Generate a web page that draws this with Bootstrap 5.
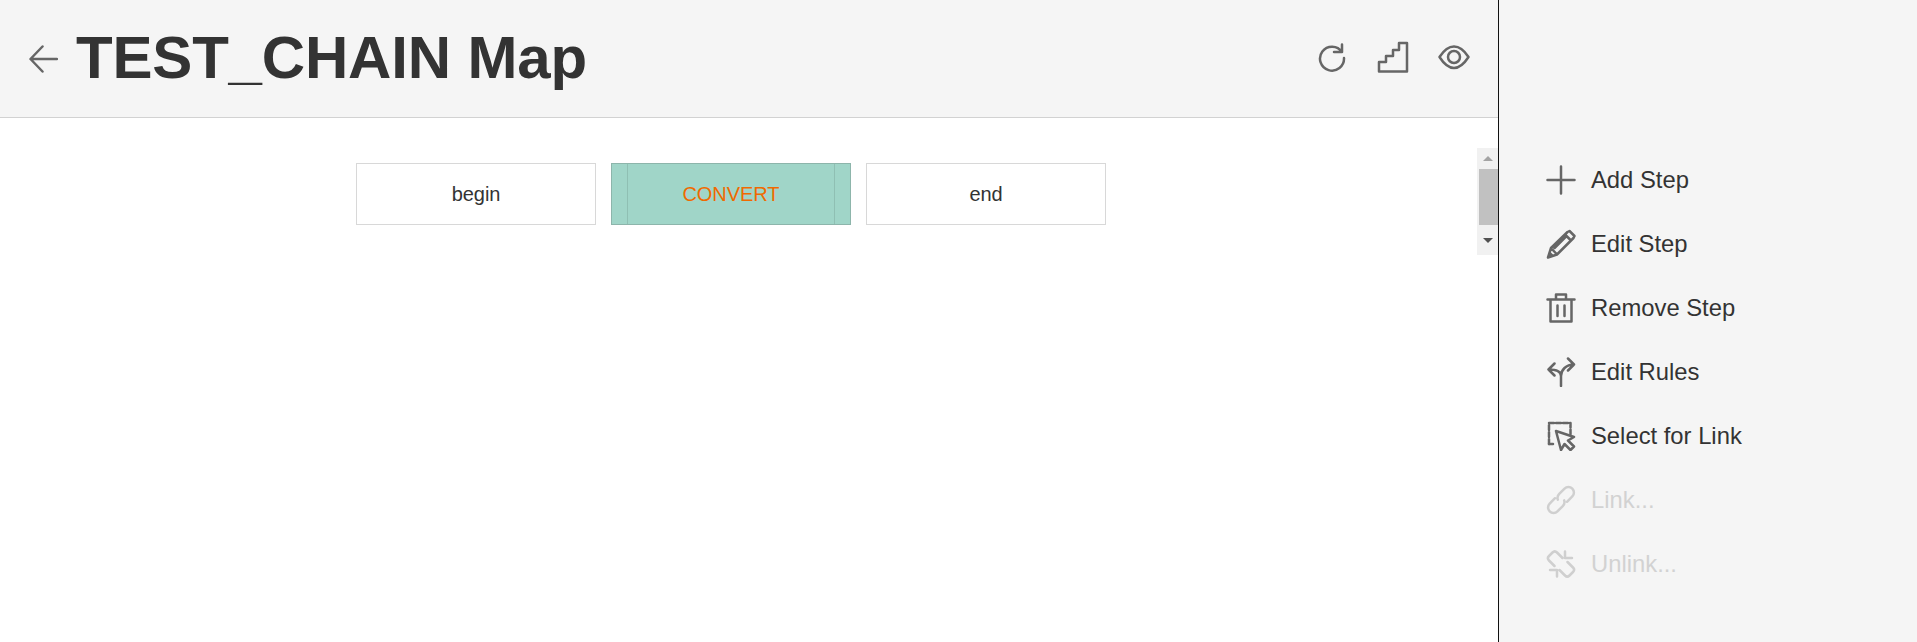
<!DOCTYPE html>
<html lang="en">
<head>
    <meta charset="UTF-8">
    <title>TEST_CHAIN Map</title>
    <link href="https://cdn.jsdelivr.net/npm/bootstrap@5.3.2/dist/css/bootstrap.min.css" rel="stylesheet">
    <script src="https://cdn.jsdelivr.net/npm/bootstrap@5.3.2/dist/js/bootstrap.bundle.min.js"></script>
    <style>
        html, body { height: 100%; overflow: hidden; }
        body { font-family: "Liberation Sans", Arial, sans-serif; color: #333; background: #fff; }
        .map-main { width: 1499px; height: 642px; border-right: 1px solid #111; }
        .map-head { height: 118px; background: #f5f5f5; border-bottom: 1px solid #d2d2d2; padding: 0 28px 0 28px; }
        .map-title { font-size: 60px; font-weight: 700; line-height: 1; letter-spacing: -.18px; color: #333; margin: -2px 0 0 18px; }
        .ico { stroke: #666; stroke-width: 2.500; fill: none; stroke-linecap: round; stroke-linejoin: round; flex: none; }
        .head-tools { gap: 29px; margin-top: -3px; }
        .map-canvas { padding: 45px 0 0 356px; }
        .step-row { gap: 15px; }
        .step-box { width: 240px; height: 62px; border: 1px solid #d8d8d8; background: #fff; font-size: 20px; letter-spacing: -.05px; }
        .step-on { background: #a0d5c8; border-color: #8db5ab; color: #f06a00; padding: 0 15px; }
        .step-on > span { border-left: 1px solid #8fbfb3; border-right: 1px solid #8fbfb3; }
        .fake-scroll { width: 21px; height: 107px; margin-top: 30px; background: #f1f1f1; }
        .fake-thumb { height: 56px; background: #c1c1c1; margin-left: 2px; }
        .arr { height: 21px; font-size: 0; }
        .arr-low { height: 20px; padding-top: 13px; }
        .arr-up, .arr-down { width: 0; height: 0; border-left: 5px solid transparent; border-right: 5px solid transparent; margin-left: 6px; }
        .arr-up { border-bottom: 5px solid #a3a3a3; }
        .arr-down { border-top: 5px solid #505050; }
        .side-panel { background: #f5f5f5; padding-top: 148px; padding-left: 47px; }
        .side-item { height: 64px; gap: 15px; font-size: 23.800px; color: #333; }
        .side-item.off { color: #d2d2d2; }
        .side-item.off .ico { stroke: #cfcfcf; }
    </style>
</head>
<body>
<div class="d-flex h-100">
    <div class="map-main d-flex flex-column flex-shrink-0">
        <div class="map-head d-flex align-items-center">
            <svg class="ico" width="30" height="30" viewBox="0 0 30 30"><path d="M29 15H3M14.500 2.500 2.500 15l12 12.500"/></svg>
            <h1 class="map-title flex-grow-1">TEST_CHAIN Map</h1>
            <div class="head-tools d-flex align-items-center">
                <svg class="ico" width="32" height="32" viewBox="0 0 32 32"><path d="M26 11A12 12 0 1 0 28 17M26 3.500V11h-8"/></svg>
                <svg class="ico" width="32" height="32" viewBox="0 0 32 32"><path d="M2 30.500V21h7v-6h7V9h6V2h8v28.500z"/></svg>
                <svg class="ico" width="32" height="32" viewBox="0 0 32 32"><path d="M1.500 16C6 9 11 5.500 16 5.500S26 9 30.500 16C26 23 21 27 16 27S6 23 1.500 16z"/><circle cx="16" cy="16" r="6"/></svg>
            </div>
        </div>
        <div class="d-flex flex-grow-1">
            <div class="map-canvas flex-grow-1">
                <div class="step-row d-flex">
                    <div class="step-box d-flex align-items-center justify-content-center">begin</div>
                    <div class="step-box step-on d-flex"><span class="flex-grow-1 d-flex align-items-center justify-content-center">CONVERT</span></div>
                    <div class="step-box d-flex align-items-center justify-content-center">end</div>
                </div>
            </div>
            <div class="fake-scroll">
                <div class="arr pt-2"><div class="arr-up"></div></div>
                <div class="fake-thumb"></div>
                <div class="arr arr-low"><div class="arr-down"></div></div>
            </div>
        </div>
    </div>
    <div class="side-panel flex-grow-1">
        <div class="side-item d-flex align-items-center">
            <svg class="ico" width="30" height="30" viewBox="0 0 30 30"><path d="M15 1.500v27M1.500 15h27"/></svg>
            <span>Add Step</span>
        </div>
        <div class="side-item d-flex align-items-center">
            <svg class="ico" width="30" height="30" viewBox="0 0 30 30"><path d="M2 28.500 5 19 21.500 3l2-1 5 5-1 2L11 25.500zM5 19l6 6.500M19 5.500l6 6M8.500 19l12-12"/><path fill="#666" stroke="none" d="M1.500 29 3.500 22l4 4z"/></svg>
            <span>Edit Step</span>
        </div>
        <div class="side-item d-flex align-items-center">
            <svg class="ico" width="30" height="30" viewBox="0 0 30 30"><path d="M1.500 6.500h27M10 6.500V1.500h10v5M4.500 6.500v22h21v-22M11.500 12.500v10.500M18.500 12.500v10.500"/></svg>
            <span>Remove Step</span>
        </div>
        <div class="side-item d-flex align-items-center">
            <svg class="ico" width="30" height="30" viewBox="0 0 30 30"><path d="M15 29V19c0-4-4-6.500-12.500-6.500M8.500 6.500l-6 6 6 6M15 19c0-6 5-11.500 13-11.500M22 1.500l6 6-6 6"/></svg>
            <span>Edit Rules</span>
        </div>
        <div class="side-item d-flex align-items-center">
            <svg class="ico" width="30" height="30" viewBox="0 0 30 30"><path stroke-dasharray="5 2" d="M3 23V2h21.500v11"/><path d="M3 23h4M10 10l5 19 3.500-6 6 6 3.500-3.500-6-6 6-3.500z"/></svg>
            <span>Select for Link</span>
        </div>
        <div class="side-item off d-flex align-items-center">
            <svg class="ico" width="30" height="30" viewBox="0 0 30 30" stroke-width="3"><g transform="rotate(-45 15 15)"><path d="M12 9.500H4.500a5.500 5.500 0 0 0 0 11H12a5.500 5.500 0 0 0 5-3M18 20.500h7.500a5.500 5.500 0 0 0 0-11H18a5.500 5.500 0 0 0-5 3"/></g></svg>
            <span>Link...</span>
        </div>
        <div class="side-item off d-flex align-items-center">
            <svg class="ico" width="30" height="30" viewBox="0 0 30 30"><path d="M8.500 17 3 11.500c-1.500-1.500-1.500-3 0-4.500L6.500 3.500c1.500-1.500 3-1.500 4.500 0L16.500 9M13.500 21l5.500 5.500c1.500 1.500 3 1.500 4.500 0l3.500-3.500c1.500-1.500 1.500-3 0-4.500L21.500 13M19 2.500V9h7M11 27.500V21H4"/></svg>
            <span>Unlink...</span>
        </div>
    </div>
</div>
</body>
</html>
